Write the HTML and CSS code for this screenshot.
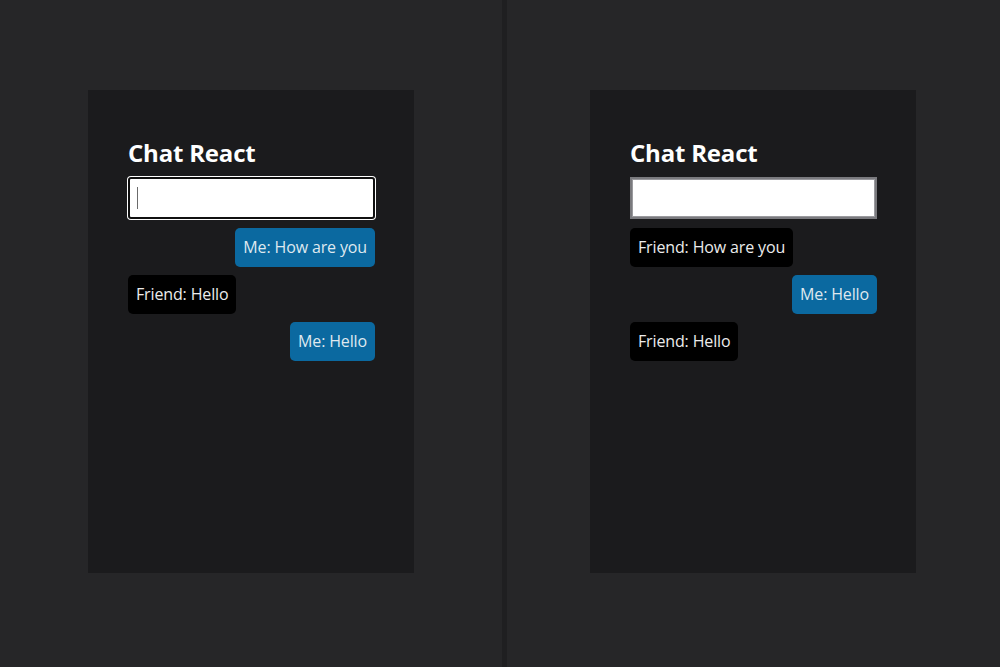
FILE: index.html
```html
<!DOCTYPE html>
<html lang="en">
<head>
<meta charset="utf-8">
<title>Chat React</title>
<link rel="stylesheet" href="styles.css">
</head>
<body>
<div class="split">
  <section class="pane pane-left">
    <div class="chat">
      <h2 class="title">Chat React</h2>
      <div class="field">
        <input class="input input-focused" type="text" aria-label="Message">
        <span class="caret"></span>
      </div>
      <div class="messages">
        <div class="msg msg-me">Me: How are you</div>
        <div class="msg msg-friend">Friend: Hello</div>
        <div class="msg msg-me">Me: Hello</div>
      </div>
    </div>
  </section>
  <div class="divider"></div>
  <section class="pane pane-right">
    <div class="chat">
      <h2 class="title">Chat React</h2>
      <div class="field">
        <input class="input" type="text" aria-label="Message">
      </div>
      <div class="messages">
        <div class="msg msg-friend">Friend: How are you</div>
        <div class="msg msg-me">Me: Hello</div>
        <div class="msg msg-friend">Friend: Hello</div>
      </div>
    </div>
  </section>
</div>
</body>
</html>
```
FILE: styles.css
```css
* { box-sizing: border-box; }
html, body {
  margin: 0;
  height: 100%;
  background: #262628;
  font-family: "Open Sans", "Noto Sans", sans-serif;
}
.split {
  display: flex;
  height: 667px;
}
.pane {
  display: flex;
  align-items: center;
  justify-content: center;
}
.pane-left { width: 502px; }
.pane-right { flex: 1; padding-right: 1px; }
.divider {
  width: 5px;
  background: #1f1f21;
}
.chat {
  width: 326px;
  height: 483px;
  margin-top: -4px;
  background: #1b1b1d;
  padding: 46px 39px 40px 40px;
  display: flex;
  flex-direction: column;
}
.title {
  margin: 0;
  font-size: 24px;
  font-weight: 700;
  line-height: 33px;
  letter-spacing: -0.2px;
  color: #ffffff;
}
.field {
  position: relative;
  margin-top: 8px;
}
.input {
  display: block;
  width: 100%;
  height: 42px;
  margin: 0;
  padding: 0 8px;
  background: #ffffff;
  border: 2px solid #7a7a7e;
  box-shadow: inset 0 0 0 1px #9a9a9e;
  border-radius: 0;
  font: inherit;
  font-size: 16px;
  caret-color: transparent;
  outline: none;
}
.input-focused {
  border: 2px solid #101010;
  border-radius: 3px;
  box-shadow: 0 0 0 1px #ffffff;
}
.caret {
  position: absolute;
  left: 9px;
  top: 10px;
  width: 1px;
  height: 22px;
  background: #6b6b6b;
}
.messages {
  margin-top: 9px;
  display: flex;
  flex-direction: column;
  gap: 8px;
}
.msg {
  padding: 8px;
  border-radius: 5px;
  font-size: 16px;
  line-height: 23px;
  letter-spacing: -0.14px;
  color: #ececec;
}
.msg-me {
  align-self: flex-end;
  background: #0b69a0;
  color: #dfe8ef;
}
.msg-friend {
  align-self: flex-start;
  background: #000000;
}
```
